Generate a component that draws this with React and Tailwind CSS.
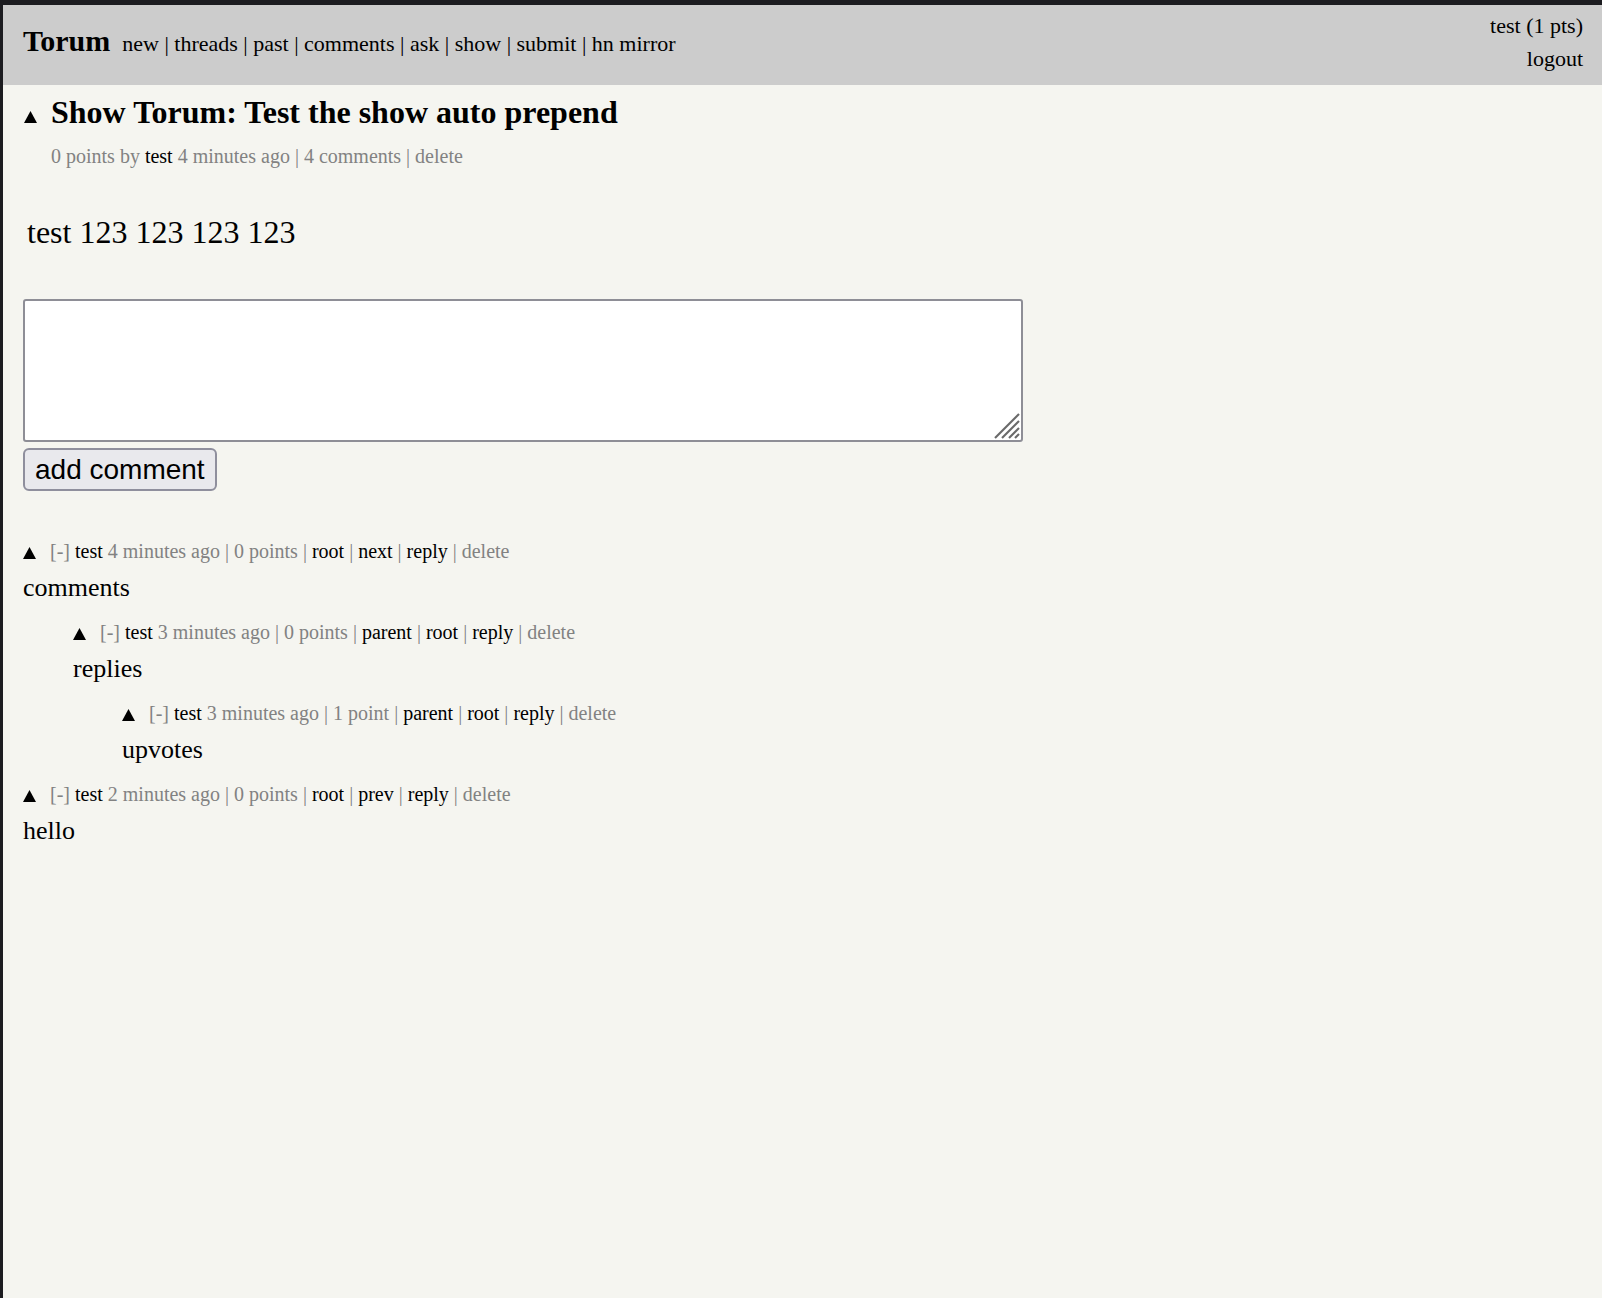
import React from 'react';

const serif = { fontFamily: '"Liberation Serif", "Times New Roman", serif' };

function Arrow({ className = '' }) {
  return (
    <svg width="13" height="12" viewBox="0 0 13 12" className={`inline-block ${className}`} aria-hidden="true">
      <polygon points="6.5,0 13,12 0,12" fill="#000" />
    </svg>
  );
}

const navLinks = ['new', 'threads', 'past', 'comments', 'ask', 'show', 'submit', 'hn mirror'];

const comments = [
  { id: 1, indent: 'ml-0', age: '4 minutes', points: '0 points', links: ['root', 'next'], text: 'comments' },
  { id: 2, indent: 'ml-[50px]', age: '3 minutes', points: '0 points', links: ['parent', 'root'], text: 'replies' },
  { id: 3, indent: 'ml-[99px]', age: '3 minutes', points: '1 point', links: ['parent', 'root'], text: 'upvotes' },
  { id: 4, indent: 'ml-0', age: '2 minutes', points: '0 points', links: ['root', 'prev'], text: 'hello' },
];

function Comment({ c }) {
  return (
    <div className={`${c.indent} mb-[7px]`}>
      <div className="text-[20px] leading-[36px] text-[#828282] whitespace-nowrap">
        <span className="mr-[14px]"><Arrow /></span>
        <span>[-]</span>{' '}
        <a className="text-black">test</a> {c.age} ago | {c.points}
        {c.links.map((l) => (
          <span key={l}>
            {' | '}
            <a className="text-black">{l}</a>
          </span>
        ))}
        {' | '}
        <a className="text-black">reply</a> | <a>delete</a>
      </div>
      <div className="text-[26px] leading-[38px] text-black">{c.text}</div>
    </div>
  );
}

export default function App() {
  return (
    <div
      className="min-h-screen bg-[#f5f5f0] border-t-[5px] border-l-[3px] border-[#1c1c20] text-black"
      style={serif}
    >
      <header className="h-[80px] bg-[#cccccc] flex justify-between pl-[20px] pr-[19px]">
        <div className="flex items-baseline pt-[20px] leading-[32px]">
          <span className="text-[30px] font-bold">Torum</span>
          <nav className="ml-[12px] text-[22px]">
            {navLinks.map((l, i) => (
              <span key={l}>
                {i > 0 && ' | '}
                <a>{l}</a>
              </span>
            ))}
          </nav>
        </div>
        <div className="flex flex-col items-end pt-[4px] text-[22px] leading-[33px]">
          <span>test (1 pts)</span>
          <a>logout</a>
        </div>
      </header>

      <main className="pl-[20px]">
        <div className="mt-[7px] flex items-baseline">
          <span className="mr-[14px] ml-[1px]"><Arrow className="relative -top-[2px]" /></span>
          <h1 className="text-[32px] leading-[40px] font-bold">Show Torum: Test the show auto prepend</h1>
        </div>
        <div className="mt-[12px] ml-[28px] text-[20px] leading-[24px] text-[#828282]">
          0 points by <a className="text-black">test</a> 4 minutes ago | 4 comments | delete
        </div>

        <p className="mt-[44px] pl-[4px] text-[32px] leading-[40px]">test 123 123 123 123</p>

        <div className="mt-[47px] relative w-[1000px] h-[143px]">
          <textarea className="block w-full h-full bg-white border-2 border-[#8e8e96] rounded-[3px] resize-none outline-none" />
          <svg width="26" height="26" viewBox="0 0 26 26" className="absolute right-[3px] bottom-[3px]" aria-hidden="true">
            <g stroke="#6a6a6a" strokeWidth="2.2">
              <line x1="1" y1="25" x2="25" y2="1" />
              <line x1="8" y1="25" x2="25" y2="8" />
              <line x1="15" y1="25" x2="25" y2="15" />
              <line x1="21" y1="25" x2="25" y2="21" />
            </g>
          </svg>
        </div>

        <button
          className="mt-[6px] block h-[43px] px-[10px] bg-[#e9e9ed] border-2 border-[#8f8f9d] rounded-[6px] text-[28px] leading-none"
          style={{ fontFamily: '"Liberation Sans", Arial, sans-serif' }}
        >
          add comment
        </button>

        <div className="mt-[42px]">
          {comments.map((c) => (
            <Comment key={c.id} c={c} />
          ))}
        </div>
      </main>
    </div>
  );
}
